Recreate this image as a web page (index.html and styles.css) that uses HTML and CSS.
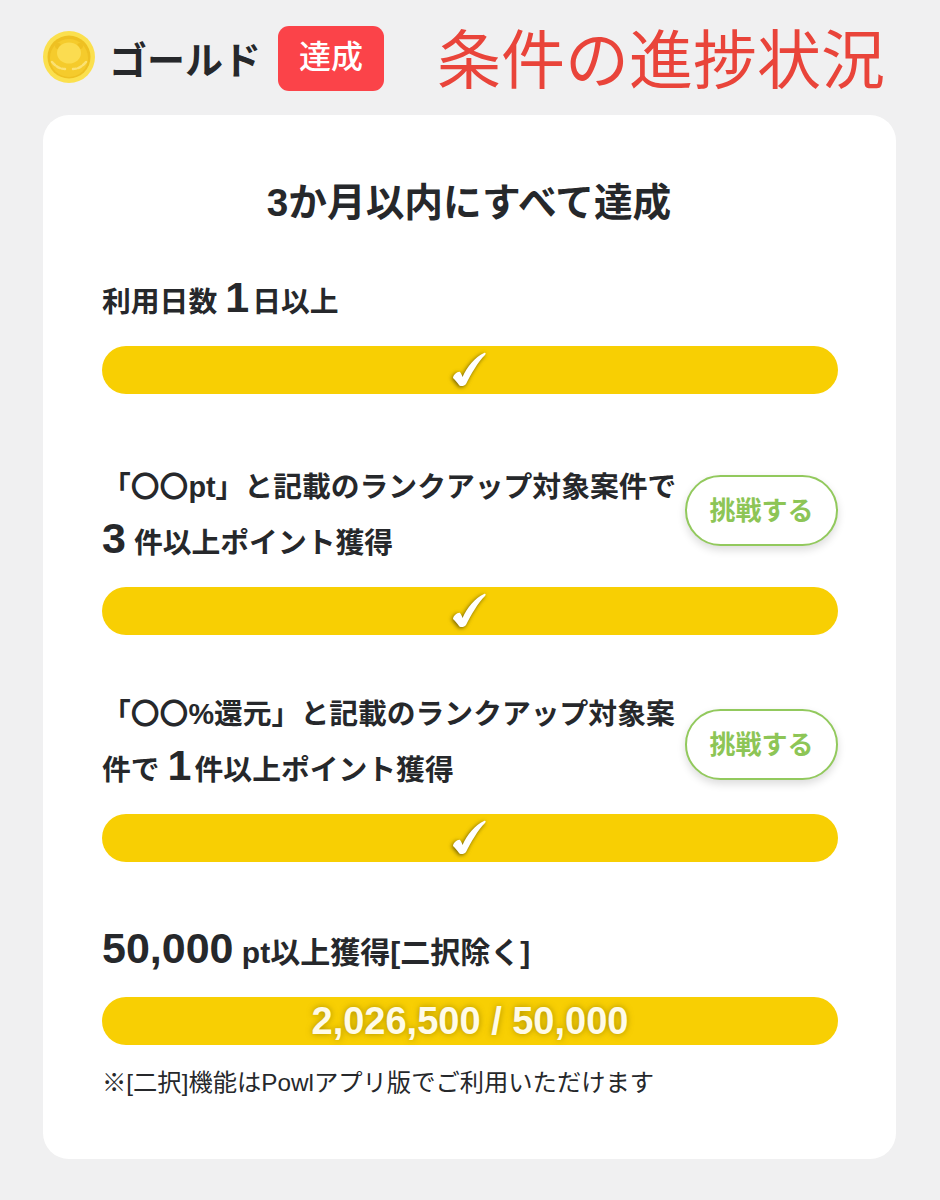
FILE: index.html
```html
<!DOCTYPE html>
<html lang="ja">
<head>
<meta charset="UTF-8">
<meta name="viewport" content="width=device-width, initial-scale=1.0">
<title>条件の進捗状況</title>
<link rel="stylesheet" href="styles.css">
</head>
<body>
    <svg class="defs" aria-hidden="true">
        <symbol id="check" viewBox="0 0 40 40">
            <path d="M3 28C3 25 8 21 10 22C11 23 12 25 12.500 27C17 17 25 7 34 3C36 2 36 4 35 5C28 12 21 24 16 34C15 36 10 37 9 35C7 32 5 30 3 28Z"/>
        </symbol>
    </svg>

    <header class="header">
        <svg class="coin" viewBox="0 0 52 52" aria-hidden="true">
            <circle cx="26" cy="26" r="26" fill="#fbe04e"/>
            <circle cx="26" cy="26" r="21.5" fill="#eec022"/>
            <circle cx="26" cy="27" r="19" fill="#f5cb2c"/>
            <circle cx="15" cy="15" r="3" fill="#eec022"/>
            <circle cx="37" cy="15" r="3" fill="#eec022"/>
            <ellipse cx="26" cy="22" rx="12" ry="10.5" fill="#fbdc50"/>
            <path d="M9 31q6 7 13 7M43 31q-6 7-13 7" fill="none" stroke="#fbe173" stroke-width="2.5" stroke-linecap="round" stroke-dasharray="4 2"/>
        </svg>
        <span class="rank">ゴールド</span>
        <span class="badge">達成</span>
        <span class="note-title">条件の進捗状況</span>
    </header>

    <main class="card">
        <h1>3か月以内にすべて達成</h1>

        <section class="cond cond-first">
            <p class="label">利用日数 <b class="one">1</b> 日以上</p>
            <div class="bar"><svg class="check"><use href="#check"/></svg></div>
        </section>

        <section class="cond">
            <div class="cond-head">
                <p class="label">「〇〇pt」と記載のランクアップ対象案件で<br><b>3</b> 件以上ポイント獲得</p>
                <a class="try" href="#">挑戦する</a>
            </div>
            <div class="bar"><svg class="check"><use href="#check"/></svg></div>
        </section>

        <section class="cond cond-tight">
            <div class="cond-head">
                <p class="label">「〇〇%還元」と記載のランクアップ対象案<br>件で <b class="one">1</b> 件以上ポイント獲得</p>
                <a class="try" href="#">挑戦する</a>
            </div>
            <div class="bar"><svg class="check"><use href="#check"/></svg></div>
        </section>

        <section class="cond cond-last">
            <p class="label label-wide"><b>50,000</b> pt以上獲得[二択除く]</p>
            <div class="bar"><span class="count">2,026,500 / 50,000</span></div>
            <p class="foot">※[二択]機能はPowlアプリ版でご利用いただけます</p>
        </section>
    </main>
</body>
</html>
```

FILE: styles.css
```css
/* page */
body {
    margin: 0;
    background-color: #f0f0f1;
    color: #26282b;
    font-family: "Liberation Sans", "Noto Sans CJK JP", sans-serif;
}

.defs {
    display: none;
}

.header {
    display: flex;
    align-items: center;
    height: 115px;
    padding-left: 43px;
}

.coin {
    width: 52px;
    height: 52px;
    margin-top: -1px;
}

.rank {
    margin-left: 14px;
    font-size: 38px;
    font-weight: 700;
}

.badge {
    margin-left: 17px;
    margin-top: 1px;
    width: 106px;
    height: 65px;
    line-height: 62px;
    text-align: center;
    border-radius: 11px;
    background-color: #fb4349;
    color: #fff;
    font-size: 32px;
    font-weight: 500;
}

.note-title {
    margin-left: 53px;
    margin-top: -6px;
    color: #e9443a;
    font-size: 64px;
    font-weight: 400;
}

/* card */
.card {
    box-sizing: border-box;
    width: 853px;
    height: 1044px;
    margin-left: 43px;
    padding: 64px 58px 0 59px;
    background-color: #fff;
    border-radius: 26px;
}

h1 {
    margin: 0 2px 0 0;
    height: 48px;
    line-height: 48px;
    text-align: center;
    font-size: 38.700px;
    font-weight: 700;
}

.cond {
    margin-top: 64px;
}

.cond-first {
    margin-top: 46px;
}

.cond-tight {
    margin-top: 50px;
}

.cond-last {
    margin-top: 62px;
}

.cond-head {
    display: flex;
    justify-content: space-between;
    align-items: flex-start;
}

.label {
    margin: 0;
    padding-top: 1px;
    font-size: 28.800px;
    line-height: 56px;
    font-weight: 700;
}

.label b {
    font-size: 43px;
    line-height: 1;
    font-weight: 700;
}

/* the 1 is set narrower than the other figures */
.label .one {
    letter-spacing: -5px;
}

.label-wide {
    font-size: 30px;
}

.try {
    box-sizing: border-box;
    flex: none;
    width: 153px;
    height: 71px;
    margin-top: 17px;
    line-height: 69px;
    text-align: center;
    text-decoration: none;
    border: 2px solid #92c95d;
    border-radius: 36px;
    background-color: #fff;
    box-shadow: 0 4px 9px rgba(0, 0, 0, 0.14);
    color: #8dc556;
    font-size: 26px;
    font-weight: 700;
}

.cond-tight .try {
    margin-top: 24px;
}

.bar {
    display: flex;
    justify-content: center;
    align-items: center;
    width: 736px;
    height: 48px;
    margin-top: 16px;
    border-radius: 24px;
    background-color: #f8cf03;
    color: #fff;
}

.check {
    width: 40px;
    height: 40px;
    fill: #fff;
    filter: drop-shadow(-1px 1px 2px rgba(70, 60, 0, 0.8));
}

.count {
    font-size: 38px;
    font-weight: 700;
    color: #fffbe8;
    text-shadow: 0 0 6px rgba(120, 100, 0, 0.6);
}

.foot {
    margin: 21px 0 0;
    font-size: 24.300px;
    line-height: 34px;
}
```
